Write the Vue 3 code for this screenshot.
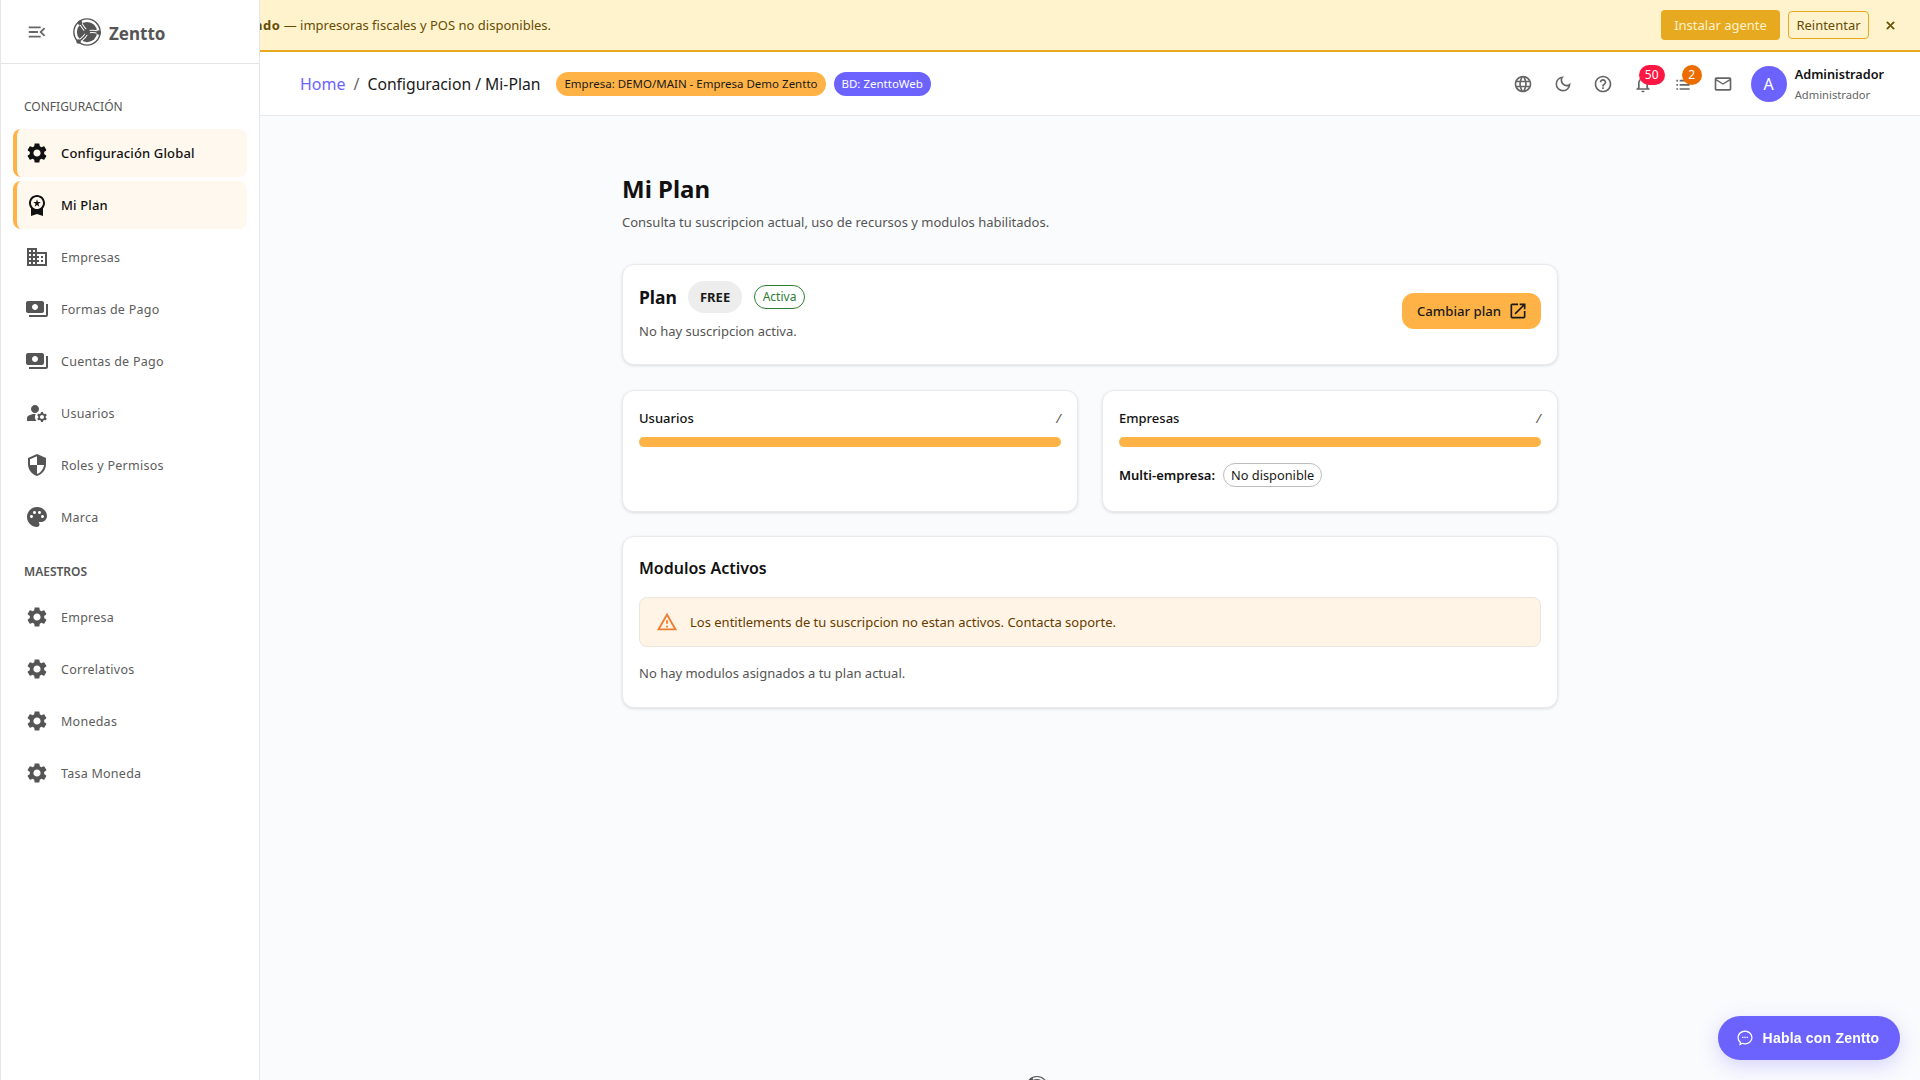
<template>
  <div class="layout">
    <aside class="sidebar">
      <div class="side-head">
        <svg class="menu-icon" viewBox="0 0 24 24"><path d="M3 18h13v-2H3v2zm0-5h10v-2H3v2zm0-7v2h13V6H3zm18 9.59L17.42 12 21 8.41 19.59 7l-5 5 5 5L21 15.59z" /></svg>
        <svg class="logo" viewBox="0 0 32 32">
          <circle cx="16" cy="16" r="14" fill="none" stroke="#555" stroke-width="1.5" />
          <circle cx="16" cy="16" r="10.8" fill="#555" />
          <path d="M16 16C13 13 11 10 8.5 6M16 16c4 -1 8 -1 12.5 .5M16 16c-1 4 -4 7 -9 10" fill="none" stroke="#fff" stroke-width="3.6" />
          <path d="M16 16C13 13 11 10 8.5 6M16 16c4 -1 8 -1 12.5 .5M16 16c-1 4 -4 7 -9 10" fill="none" stroke="#555" stroke-width="1.5" />
          <circle cx="16" cy="16" r="3.2" fill="#555" />
          <circle cx="8.5" cy="6" r="2.4" fill="#555" />
          <circle cx="28.5" cy="16.5" r="2.4" fill="#555" />
          <circle cx="7" cy="26" r="2.4" fill="#555" />
        </svg>
        <span class="brand">Zentto</span>
      </div>
      <nav class="side-nav">
        <template v-for="group in menu" :key="group.title">
          <div class="group-title" :class="{ strong: group.strong }">{{ group.title }}</div>
          <a v-for="item in group.items" :key="item.label" class="nav-item" :class="{ active: item.active }">
            <svg class="nav-icon" viewBox="0 0 24 24"><path :d="icons[item.icon]" /></svg>
            <span>{{ item.label }}</span>
          </a>
        </template>
      </nav>
    </aside>

    <div class="main">
      <div class="banner">
        <span class="banner-msg"><b>ndo</b> — impresoras fiscales y POS no disponibles.</span>
        <button class="btn-install">Instalar agente</button>
        <button class="btn-retry">Reintentar</button>
        <svg class="banner-close" viewBox="0 0 24 24"><path d="M19 6.41 17.59 5 12 10.59 6.41 5 5 6.41 10.59 12 5 17.59 6.41 19 12 13.41 17.59 19 19 17.59 13.41 12z" /></svg>
      </div>

      <header class="topbar">
        <div class="crumbs">
          <a class="home">Home</a>
          <span class="sep">/</span>
          <span class="current">Configuracion / Mi-Plan</span>
        </div>
        <span class="pill pill-orange">Empresa: DEMO/MAIN - Empresa Demo Zentto</span>
        <span class="pill pill-purple">BD: ZenttoWeb</span>
        <div class="top-icons">
          <button v-for="ic in topIcons" :key="ic.name" class="top-btn">
            <svg viewBox="0 0 24 24"><path :d="ic.d" /></svg>
            <span v-if="ic.badge" class="badge" :class="ic.tone">{{ ic.badge }}</span>
          </button>
        </div>
        <div class="user">
          <div class="avatar">A</div>
          <div class="user-text">
            <div class="user-name">Administrador</div>
            <div class="user-role">Administrador</div>
          </div>
        </div>
      </header>

      <main class="content">
        <div class="page">
          <h1>Mi Plan</h1>
          <p class="subtitle">Consulta tu suscripcion actual, uso de recursos y modulos habilitados.</p>

          <section class="card plan-card">
            <div>
              <div class="plan-row">
                <span class="plan-title">Plan</span>
                <span class="chip-free">FREE</span>
                <span class="chip-active">Activa</span>
              </div>
              <div class="muted">No hay suscripcion activa.</div>
            </div>
            <button class="btn-change">
              Cambiar plan
              <svg viewBox="0 0 24 24"><path d="M19 19H5V5h7V3H5c-1.11 0-2 .9-2 2v14c0 1.1.89 2 2 2h14c1.1 0 2-.9 2-2v-7h-2v7zM14 3v2h3.59l-9.83 9.83 1.41 1.41L19 6.41V10h2V3h-7z" /></svg>
            </button>
          </section>

          <div class="usage-grid">
            <section class="card usage-card">
              <div class="usage-head"><span>Usuarios</span><i>/</i></div>
              <div class="bar"></div>
            </section>
            <section class="card usage-card">
              <div class="usage-head"><span>Empresas</span><i>/</i></div>
              <div class="bar"></div>
              <div class="multi">
                <b>Multi-empresa:</b>
                <span class="chip-outline">No disponible</span>
              </div>
            </section>
          </div>

          <section class="card modules-card">
            <h2>Modulos Activos</h2>
            <div class="alert">
              <svg viewBox="0 0 24 24"><path d="M12 5.99 19.53 19H4.47L12 5.99M12 2 1 21h22L12 2zm1 14h-2v2h2v-2zm0-6h-2v4h2v-4z" /></svg>
              <span>Los entitlements de tu suscripcion no estan activos. Contacta soporte.</span>
            </div>
            <div class="muted modules-empty">No hay modulos asignados a tu plan actual.</div>
          </section>
        </div>

        <div class="foot-logo">
          <svg viewBox="0 0 32 32">
            <circle cx="16" cy="16" r="14" fill="none" stroke="#555" stroke-width="1.5" />
            <circle cx="16" cy="16" r="10.8" fill="#555" />
            <path d="M16 16C13 13 11 10 8.5 6M16 16c4 -1 8 -1 12.5 .5M16 16c-1 4 -4 7 -9 10" fill="none" stroke="#fff" stroke-width="3.6" />
            <circle cx="8.5" cy="6" r="2.4" fill="#555" />
          </svg>
        </div>
      </main>
    </div>

    <button class="chat-btn">
      <svg viewBox="0 0 24 24"><path d="M12 3C6.9 3 3 6.7 3 11.5c0 2.5 1.1 4.7 2.8 6.2L5 21l3.8-1.7c1 .3 2.1.5 3.2.5 5.1 0 9-3.7 9-8.3S17.1 3 12 3zm0 15.3c-1 0-2-.2-2.9-.5l-.5-.2-1.5.7.3-1.4-.5-.5c-1.5-1.2-2.4-3-2.4-4.9 0-3.9 3.3-6.8 7.5-6.8s7.5 2.9 7.5 6.8-3.3 6.8-7.5 6.8zM8.5 10.5h1.6v1.6H8.5zm2.7 0h1.6v1.6h-1.6zm2.7 0h1.6v1.6h-1.6z" /></svg>
      Habla con Zentto
    </button>
  </div>
</template>

<script setup>
const gear = 'M19.14 12.94c.04-.3.06-.61.06-.94 0-.32-.02-.64-.07-.94l2.03-1.58a.49.49 0 0 0 .12-.61l-1.92-3.32a.488.488 0 0 0-.59-.22l-2.39.96c-.5-.38-1.03-.7-1.62-.94l-.36-2.54a.484.484 0 0 0-.48-.41h-3.84c-.24 0-.43.17-.47.41l-.36 2.54c-.59.24-1.13.57-1.62.94l-2.39-.96c-.22-.08-.47 0-.59.22L2.74 8.87c-.12.21-.08.47.12.61l2.03 1.58c-.05.3-.09.63-.09.94s.02.64.07.94l-2.03 1.58a.49.49 0 0 0-.12.61l1.92 3.32c.12.22.37.29.59.22l2.39-.96c.5.38 1.03.7 1.62.94l.36 2.54c.05.24.24.41.48.41h3.84c.24 0 .44-.17.47-.41l.36-2.54c.59-.24 1.13-.56 1.62-.94l2.39.96c.22.08.47 0 .59-.22l1.92-3.32c.12-.22.07-.47-.12-.61l-2.01-1.58zM12 15.6c-1.98 0-3.6-1.62-3.6-3.6s1.62-3.6 3.6-3.6 3.6 1.62 3.6 3.6-1.62 3.6-3.6 3.6z'

const icons = {
  gear,
  award: 'M9.68 13.69 12 11.93l2.31 1.76-.88-2.85L15.75 9h-2.84L12 6.19 11.09 9H8.25l2.31 1.84-.88 2.85zM20 10c0-4.42-3.58-8-8-8s-8 3.58-8 8c0 2.03.76 3.87 2 5.28V23l6-2 6 2v-7.72c1.24-1.41 2-3.25 2-5.28zm-8-6c3.31 0 6 2.69 6 6s-2.69 6-6 6-6-2.69-6-6 2.69-6 6-6z',
  domain: 'M12 7V3H2v18h20V7H12zM6 19H4v-2h2v2zm0-4H4v-2h2v2zm0-4H4V9h2v2zm0-4H4V5h2v2zm4 12H8v-2h2v2zm0-4H8v-2h2v2zm0-4H8V9h2v2zm0-4H8V5h2v2zm10 12h-8v-2h2v-2h-2v-2h2v-2h-2V9h8v10zm-2-8h-2v2h2v-2zm0 4h-2v2h2v-2z',
  payments: 'M19 14V6c0-1.1-.9-2-2-2H3c-1.1 0-2 .9-2 2v8c0 1.1.9 2 2 2h14c1.1 0 2-.9 2-2zm-9-1c-1.66 0-3-1.34-3-3s1.34-3 3-3 3 1.34 3 3-1.34 3-3 3zm13-6v11c0 1.1-.9 2-2 2H4v-2h17V7h2z',
  manage: 'M10.67 13.02c-.22-.01-.44-.02-.67-.02-2.42 0-4.68.67-6.61 1.82-.88.52-1.39 1.5-1.39 2.53V20h9.26a6.963 6.963 0 0 1-.59-6.98zM10 12c2.21 0 4-1.79 4-4s-1.79-4-4-4-4 1.79-4 4 1.79 4 4 4zm10.75 4c0-.22-.03-.42-.06-.63l1.14-1.01-1-1.73-1.45.49c-.32-.27-.68-.48-1.08-.63L18 11h-2l-.3 1.49c-.4.15-.76.36-1.08.63l-1.45-.49-1 1.73 1.14 1.01c-.03.21-.06.41-.06.63s.03.42.06.63l-1.14 1.01 1 1.73 1.45-.49c.32.27.68.48 1.08.63L16 21h2l.3-1.49c.4-.15.76-.36 1.08-.63l1.45.49 1-1.73-1.14-1.01c.03-.21.06-.41.06-.63zM17 18c-1.1 0-2-.9-2-2s.9-2 2-2 2 .9 2 2-.9 2-2 2z',
  shield: 'M12 1 3 5v6c0 5.55 3.84 10.74 9 12 5.16-1.26 9-6.45 9-12V5l-9-4zm0 10.99h7c-.53 4.12-3.28 7.79-7 8.94V12H5V6.3l7-3.11v8.8z',
  palette: 'M12 2C6.49 2 2 6.49 2 12s4.49 10 10 10c1.38 0 2.5-1.12 2.5-2.5 0-.61-.23-1.2-.64-1.67a.528.528 0 0 1-.13-.33c0-.28.22-.5.5-.5H16c3.31 0 6-2.69 6-6 0-4.96-4.49-9-10-9zm-5.5 11c-.83 0-1.5-.67-1.5-1.5S5.67 10 6.5 10s1.5.67 1.5 1.5S7.33 13 6.5 13zm3-4C8.67 9 8 8.33 8 7.5S8.67 6 9.5 6s1.5.67 1.5 1.5S10.33 9 9.5 9zm5 0c-.83 0-1.5-.67-1.5-1.5S13.67 6 14.5 6s1.5.67 1.5 1.5S15.33 9 14.5 9zm3 4c-.83 0-1.5-.67-1.5-1.5s.67-1.5 1.5-1.5 1.5.67 1.5 1.5-.67 1.5-1.5 1.5z'
}

const menu = [
  {
    title: 'CONFIGURACIÓN',
    items: [
      { label: 'Configuración Global', icon: 'gear', active: true },
      { label: 'Mi Plan', icon: 'award', active: true },
      { label: 'Empresas', icon: 'domain' },
      { label: 'Formas de Pago', icon: 'payments' },
      { label: 'Cuentas de Pago', icon: 'payments' },
      { label: 'Usuarios', icon: 'manage' },
      { label: 'Roles y Permisos', icon: 'shield' },
      { label: 'Marca', icon: 'palette' }
    ]
  },
  {
    title: 'MAESTROS',
    strong: true,
    items: [
      { label: 'Empresa', icon: 'gear' },
      { label: 'Correlativos', icon: 'gear' },
      { label: 'Monedas', icon: 'gear' },
      { label: 'Tasa Moneda', icon: 'gear' }
    ]
  }
]

const topIcons = [
  { name: 'globe', d: 'M11.99 2C6.47 2 2 6.48 2 12s4.47 10 9.99 10C17.52 22 22 17.52 22 12S17.52 2 11.99 2zm6.93 6h-2.95a15.65 15.65 0 0 0-1.38-3.56A8.03 8.03 0 0 1 18.92 8zM12 4.04c.83 1.2 1.48 2.53 1.91 3.96h-3.82c.43-1.43 1.08-2.76 1.91-3.96zM4.26 14C4.1 13.36 4 12.69 4 12s.1-1.36.26-2h3.38c-.08.66-.14 1.32-.14 2s.06 1.34.14 2H4.26zm.82 2h2.95c.32 1.25.78 2.45 1.38 3.56A7.987 7.987 0 0 1 5.08 16zm2.95-8H5.08a7.987 7.987 0 0 1 4.33-3.56A15.65 15.65 0 0 0 8.03 8zM12 19.96c-.83-1.2-1.48-2.53-1.91-3.96h3.82c-.43 1.43-1.08 2.76-1.91 3.96zM14.34 14H9.66c-.09-.66-.16-1.32-.16-2s.07-1.35.16-2h4.68c.09.65.16 1.32.16 2s-.07 1.34-.16 2zm.25 5.56c.6-1.11 1.06-2.31 1.38-3.56h2.95a8.03 8.03 0 0 1-4.33 3.56zM16.36 14c.08-.66.14-1.32.14-2s-.06-1.34-.14-2h3.38c.16.64.26 1.31.26 2s-.1 1.36-.26 2h-3.38z' },
  { name: 'moon', d: 'M9.37 5.51A7.35 7.35 0 0 0 9.1 7.5c0 4.08 3.32 7.4 7.4 7.4.68 0 1.35-.09 1.99-.27A7.014 7.014 0 0 1 12 19c-3.86 0-7-3.14-7-7 0-2.93 1.81-5.44 4.37-6.49zM12 3a9 9 0 1 0 9 9c0-.46-.04-.92-.1-1.36a5.389 5.389 0 0 1-4.4 2.26 5.403 5.403 0 0 1-3.14-9.8c-.44-.06-.9-.1-1.36-.1z' },
  { name: 'help', d: 'M11 18h2v-2h-2v2zm1-16C6.48 2 2 6.48 2 12s4.48 10 10 10 10-4.48 10-10S17.52 2 12 2zm0 18c-4.41 0-8-3.59-8-8s3.59-8 8-8 8 3.59 8 8-3.59 8-8 8zm0-14c-2.21 0-4 1.79-4 4h2c0-1.1.9-2 2-2s2 .9 2 2c0 2-3 1.75-3 5h2c0-2.25 3-2.5 3-5 0-2.21-1.79-4-4-4z' },
  { name: 'bell', badge: '50', tone: 'red', d: 'M12 22c1.1 0 2-.9 2-2h-4c0 1.1.9 2 2 2zm6-6v-5c0-3.07-1.63-5.64-4.5-6.32V4c0-.83-.67-1.5-1.5-1.5s-1.5.67-1.5 1.5v.68C7.64 5.36 6 7.92 6 11v5l-2 2v1h16v-1l-2-2zm-2 1H8v-6c0-2.48 1.51-4.5 4-4.5s4 2.02 4 4.5v6z' },
  { name: 'list', badge: '2', tone: 'orange', d: 'M4 14h2v-2H4v2zm0 5h2v-2H4v2zM4 9h2V7H4v2zm4 5h12v-2H8v2zm0 5h12v-2H8v2zM8 7v2h12V7H8z' },
  { name: 'mail', d: 'M20 4H4c-1.1 0-1.99.9-1.99 2L2 18c0 1.1.9 2 2 2h16c1.1 0 2-.9 2-2V6c0-1.1-.9-2-2-2zm0 14H4V8l8 5 8-5v10zm-8-7L4 6h16l-8 5z' }
]
</script>

<style>
html, body {
  margin: 0;
  height: 100%;
  background: #fafbfd;
}
</style>

<style scoped>
.layout {
  display: flex;
  height: 100vh;
  overflow: hidden;
  font-family: "Noto Sans", "Open Sans", sans-serif;
  color: #1a1a1a;
}

.sidebar {
  width: 260px;
  flex-shrink: 0;
  box-sizing: border-box;
  background: #fff;
  border-left: 1px solid #e6e6e6;
  border-right: 1px solid #e6e6e6;
  z-index: 2;
}

.side-head {
  height: 64px;
  box-sizing: border-box;
  display: flex;
  align-items: center;
  border-bottom: 1px solid #e4e4e4;
  padding-left: 25px;
}

.menu-icon {
  width: 22px;
  height: 22px;
  fill: #666;
}

.logo {
  width: 30px;
  height: 30px;
  margin-left: 24px;
}

.brand {
  margin-left: 7px;
  margin-top: 3px;
  font-size: 17px;
  font-weight: 700;
  color: #555;
}

.side-nav {
  padding: 33px 12px 0 12px;
}

.group-title {
  font-size: 12px;
  line-height: 20px;
  color: #555;
  padding-left: 11px;
  margin-bottom: 12px;
}

.group-title.strong {
  font-weight: 600;
  margin-top: 21px;
  margin-bottom: 11px;
}

.nav-item {
  display: flex;
  align-items: center;
  height: 48px;
  margin-bottom: 4px;
  padding-left: 12px;
  box-sizing: border-box;
  border-radius: 8px;
  font-size: 12.5px;
  letter-spacing: 0.25px;
  color: #5c5c5c;
}

.nav-item.active {
  background: #fff8ee;
  border-left: 4px solid #ffb347;
  padding-left: 8px;
  color: #111;
  font-size: 13px;
  font-weight: 500;
  letter-spacing: 0.15px;
}

.nav-icon {
  width: 24px;
  height: 24px;
  fill: #555;
  margin-right: 12px;
  flex-shrink: 0;
}

.active .nav-icon {
  fill: #111;
}

.main {
  flex: 1;
  min-width: 0;
  display: flex;
  flex-direction: column;
  overflow: hidden;
}

.banner {
  height: 52px;
  flex-shrink: 0;
  box-sizing: border-box;
  display: flex;
  align-items: center;
  background: #fff3cd;
  border-bottom: 2px solid #e6a91f;
  padding-right: 23px;
  font-size: 13px;
  color: #664d03;
}

.banner-msg {
  margin-left: -6px;
  margin-right: auto;
  white-space: nowrap;
}

.banner-msg b {
  font-weight: 700;
  letter-spacing: 0.5px;
}

.banner button {
  font-family: inherit;
  font-size: 13px;
  border-radius: 4px;
  cursor: pointer;
}

.btn-install {
  width: 119px;
  height: 30px;
  padding: 0;
  border: 0;
  background: #e6a91f;
  color: #fff3cd;
}

.btn-retry {
  width: 81px;
  height: 28px;
  padding: 0;
  margin-left: 8px;
  background: transparent;
  border: 1px solid #e6a91f;
  color: #664d03;
}

.banner-close {
  width: 13px;
  height: 13px;
  margin-left: 15px;
  fill: #664d03;
  stroke: #664d03;
  stroke-width: 1.5;
}

.topbar {
  height: 64px;
  flex-shrink: 0;
  box-sizing: border-box;
  display: flex;
  align-items: center;
  background: #fff;
  border-bottom: 1px solid #e8e8e8;
  padding: 0 36px 0 40px;
}

.crumbs {
  display: flex;
  align-items: center;
  font-size: 16px;
  margin-right: 16px;
}

.home {
  color: #6c63ff;
}

.sep {
  color: #666;
  margin: 0 8px;
}

.current {
  font-size: 15.7px;
}

.pill {
  height: 24px;
  line-height: 24px;
  border-radius: 12px;
  padding: 0 8px;
  font-size: 11.5px;
  white-space: nowrap;
}

.pill-orange {
  background: #ffb347;
  color: #1a1a1a;
}

.pill-purple {
  background: #6c63ff;
  color: #fff;
  margin-left: 8px;
}

.top-icons {
  display: flex;
  margin-left: auto;
}

.top-btn {
  position: relative;
  width: 40px;
  height: 40px;
  padding: 0;
  border: 0;
  background: none;
  display: flex;
  align-items: center;
  justify-content: center;
}

.top-btn svg {
  width: 20px;
  height: 20px;
  fill: #666;
}

.badge {
  position: absolute;
  top: 1px;
  height: 20px;
  min-width: 20px;
  line-height: 20px;
  padding: 0 3px;
  box-sizing: border-box;
  border-radius: 10px;
  color: #fff;
  font-size: 12px;
  font-family: "Noto Sans", sans-serif;
  text-align: center;
}

.badge.red {
  left: 16px;
  width: 26px;
  background: #ff1744;
}

.badge.orange {
  left: 19px;
  background: #ed6c02;
}

.user {
  display: flex;
  align-items: center;
  margin-left: 8px;
}

.avatar {
  width: 36px;
  height: 36px;
  border-radius: 50%;
  background: #6c63ff;
  color: #fff;
  font-size: 16px;
  display: flex;
  align-items: center;
  justify-content: center;
}

.user-text {
  margin-left: 8px;
}

.user-name {
  font-size: 12.7px;
  font-weight: 600;
  line-height: 20px;
  color: #111;
}

.user-role {
  font-size: 11.2px;
  line-height: 18px;
  margin-top: 2px;
  color: #666;
}

.content {
  flex: 1;
  min-height: 0;
  display: flex;
  flex-direction: column;
  background: #fafbfd;
}

.page {
  width: 936px;
  margin: 0 auto;
  padding-top: 56px;
}

h1 {
  margin: 0;
  font-size: 24px;
  line-height: 34px;
  font-weight: 700;
  color: #111;
}

.subtitle {
  margin: 6px 0 0;
  font-size: 13px;
  line-height: 20px;
  color: #555;
}

.card {
  box-sizing: border-box;
  background: #fff;
  border: 1px solid #e8eaee;
  border-radius: 12px;
  box-shadow: 0 1px 3px rgba(0, 0, 0, 0.12);
  padding: 16px;
}

.plan-card {
  margin-top: 32px;
  height: 101px;
  padding-bottom: 24px;
  display: flex;
  align-items: center;
  justify-content: space-between;
}

.plan-row {
  display: flex;
  align-items: center;
  height: 32px;
}

.plan-title {
  font-size: 17.5px;
  font-weight: 700;
  color: #111;
}

.chip-free {
  height: 32px;
  line-height: 32px;
  padding: 0 12px;
  border-radius: 16px;
  margin-left: 11px;
  background: #ededed;
  font-size: 13px;
  font-weight: 700;
}

.chip-active {
  height: 24px;
  line-height: 22px;
  padding: 0 7.5px;
  box-sizing: border-box;
  border-radius: 12px;
  margin-left: 12px;
  border: 1px solid #2e7d32;
  color: #2e7d32;
  font-size: 12px;
}

.muted {
  font-size: 13px;
  line-height: 20px;
  color: #555;
  margin-top: 8px;
}

.btn-change {
  height: 36px;
  width: 139px;
  padding: 0 0 0 2px;
  border: 0;
  border-radius: 12px;
  background: #ffb347;
  color: #1a1a1a;
  font-family: inherit;
  font-size: 13.2px;
  font-weight: 500;
  display: flex;
  align-items: center;
  justify-content: center;
  gap: 7px;
}

.btn-change svg {
  width: 20px;
  height: 20px;
  fill: #1a1a1a;
}

.usage-grid {
  display: grid;
  grid-template-columns: 1fr 1fr;
  gap: 24px;
  margin-top: 25px;
}

.usage-card {
  height: 122px;
}

.usage-head {
  display: flex;
  justify-content: space-between;
  margin-top: 1px;
  font-size: 13px;
  line-height: 20px;
  font-weight: 500;
  color: #111;
}

.usage-head i {
  font-weight: 400;
  color: #555;
}

.bar {
  height: 10px;
  border-radius: 5px;
  background: #ffb347;
  margin-top: 9px;
}

.multi {
  display: flex;
  align-items: center;
  margin-top: 16px;
  font-size: 13px;
}

.multi b {
  font-weight: 600;
  color: #111;
}

.chip-outline {
  height: 24px;
  line-height: 22px;
  box-sizing: border-box;
  padding: 0 7px;
  margin-left: 8px;
  border: 1px solid #bdbdbd;
  border-radius: 12px;
  font-size: 12.8px;
}

.modules-card {
  margin-top: 24px;
  height: 172px;
}

h2 {
  margin: 3px 0 0;
  font-size: 16px;
  line-height: 24px;
  font-weight: 600;
  color: #111;
}

.alert {
  height: 50px;
  margin-top: 17px;
  box-sizing: border-box;
  display: flex;
  align-items: center;
  padding-left: 16px;
  background: #fff4e5;
  border: 1px solid #ece5dc;
  border-radius: 8px;
  font-size: 13px;
  color: #663c00;
}

.alert svg {
  width: 22px;
  height: 22px;
  fill: #ed7d31;
  margin-right: 12px;
}

.modules-empty {
  margin-top: 16px;
}

.foot-logo {
  margin-top: auto;
  margin-bottom: -19px;
  padding-left: 765px;
}

.foot-logo svg {
  display: block;
  width: 24px;
  height: 24px;
}

.chat-btn {
  position: fixed;
  right: 20px;
  bottom: 20px;
  height: 44px;
  width: 182px;
  padding: 0 4px 0 0;
  border: 0;
  border-radius: 22px;
  background: #6c63ff;
  color: #fff;
  font-family: "Liberation Sans", sans-serif;
  font-size: 14px;
  font-weight: 700;
  letter-spacing: 0.2px;
  display: flex;
  align-items: center;
  justify-content: center;
  gap: 8px;
  box-shadow: 0 6px 20px rgba(108, 99, 255, 0.25);
  z-index: 3;
}

.chat-btn svg {
  width: 20px;
  height: 20px;
  fill: #fff;
}
</style>
